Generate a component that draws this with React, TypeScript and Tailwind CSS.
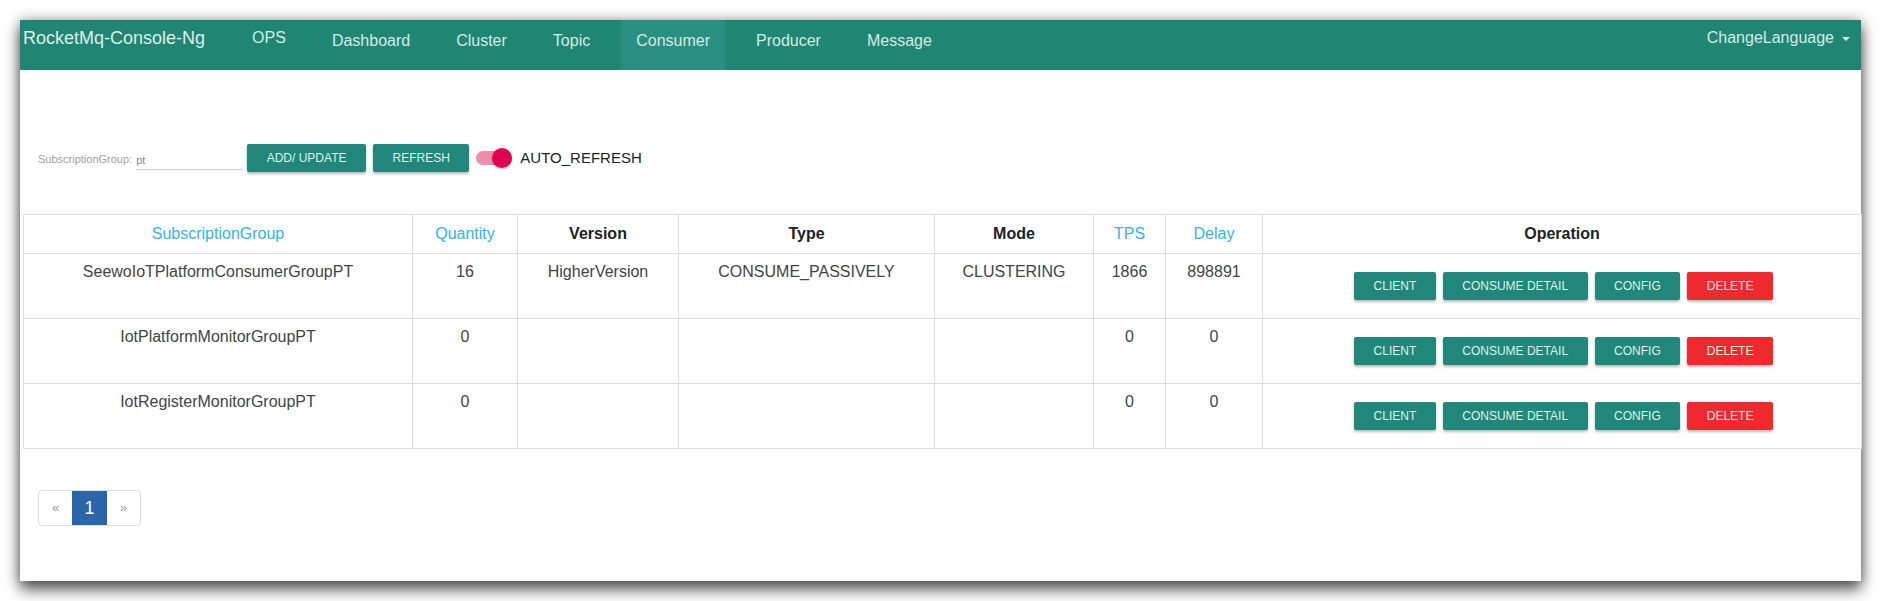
import React from "react";

const font = { fontFamily: '"Liberation Sans", Arial, sans-serif' };

function Btn({ label, red }: { label: string; red?: boolean }) {
  return (
    <button
      className={
        "h-[28px] px-[19.5px] rounded-[2px] text-[12px] leading-[28px] shadow-[0_2px_3px_rgba(0,0,0,0.28)] " +
        (red ? "bg-[#ef2a2e] text-[#fde7e7]" : "bg-[#21877a] text-[#def2ee]")
      }
    >
      {label}
    </button>
  );
}

const rows = [
  { group: "SeewoIoTPlatformConsumerGroupPT", qty: "16", version: "HigherVersion", type: "CONSUME_PASSIVELY", mode: "CLUSTERING", tps: "1866", delay: "898891" },
  { group: "IotPlatformMonitorGroupPT", qty: "0", version: "", type: "", mode: "", tps: "0", delay: "0" },
  { group: "IotRegisterMonitorGroupPT", qty: "0", version: "", type: "", mode: "", tps: "0", delay: "0" },
];

export default function App() {
  const navLinks = ["Dashboard", "Cluster", "Topic", "Consumer", "Producer", "Message"];
  const td = "border border-[#dddddd] align-top pt-[8px] text-[16px] leading-[20px] text-[#444] text-center";
  const thBlue = "border border-[#dddddd] py-[9px] text-[16px] leading-[20px] font-normal text-[#33b2f2] text-center";
  const thDark = "border border-[#dddddd] py-[9px] text-[16px] leading-[20px] font-bold text-[#222] text-center";
  return (
    <div className="w-[1881px] h-[601px] bg-white pt-[20px] pl-[20px]" style={font}>
      <div className="w-[1841px] h-[561px] bg-white flex flex-col shadow-[0_9px_14px_rgba(0,0,0,0.6),0_0_12px_rgba(0,0,0,0.35)]">
        {/* navbar */}
        <div className="h-[50px] bg-[#218574] flex items-stretch shrink-0">
          <div className="pl-[3px] pr-[32px] pt-[8px] text-[18px] leading-[20px] text-[#dcefeb]">RocketMq-Console-Ng</div>
          <div className="flex gap-[16px] items-stretch">
            <div className="px-[15px] pt-[8px] text-[16px] leading-[20px] text-[#d3ebe6]">OPS</div>
            {navLinks.map((l) => (
              <div
                key={l}
                className={
                  "px-[15px] pt-[11px] text-[16px] leading-[20px] text-[#d3ebe6] " +
                  (l === "Consumer" ? "bg-[#2a8f80]" : "")
                }
              >
                {l}
              </div>
            ))}
          </div>
          <div className="ml-auto pr-[11px] pt-[8px] flex items-start gap-[8px] text-[16px] leading-[20px] text-[#d3ebe6]">
            <span>ChangeLanguage</span>
            <span className="mt-[9px] w-0 h-0 border-t-[4px] border-t-[#d3ebe6] border-x-[4px] border-x-transparent" />
          </div>
        </div>

        {/* toolbar */}
        <div className="mt-[74px] h-[28px] flex items-center pl-[18px]">
          <span className="text-[11px] text-[#a0a0a0] leading-[14px] pt-[2px]">SubscriptionGroup:</span>
          <div className="ml-[4px] w-[107px] h-[20px] border-b border-[#cfcfcf] text-[11px] leading-[14px] text-[#888] pt-[3px] pl-[0px] mt-[4px]">
            pt
          </div>
          <div className="ml-[4px] flex gap-[7px]">
            <Btn label="ADD/ UPDATE" />
            <Btn label="REFRESH" />
          </div>
          <div className="ml-[7px] relative w-[36px] h-[20px] flex items-center">
            <div className="w-[34px] h-[14px] rounded-full bg-[#f08cab]" />
            <div className="absolute right-0 top-0 w-[20px] h-[20px] rounded-full bg-[#e0004f] shadow-[0_1px_2px_rgba(0,0,0,0.3)]" />
          </div>
          <span className="ml-[8px] text-[15px] leading-[20px] text-[#222]">AUTO_REFRESH</span>
        </div>

        {/* table */}
        <div className="mt-[42px] pl-[3px]">
          <table className="border-collapse table-fixed w-[1838px]">
            <thead>
              <tr>
                <th className={thBlue + " w-[389px]"}>SubscriptionGroup</th>
                <th className={thBlue + " w-[105px]"}>Quantity</th>
                <th className={thDark + " w-[161px]"}>Version</th>
                <th className={thDark + " w-[256px]"}>Type</th>
                <th className={thDark + " w-[159px]"}>Mode</th>
                <th className={thBlue + " w-[72px]"}>TPS</th>
                <th className={thBlue + " w-[97px]"}>Delay</th>
                <th className={thDark + " w-[599px]"}>Operation</th>
              </tr>
            </thead>
            <tbody>
              {rows.map((r) => (
                <tr key={r.group}>
                  <td className={td}>{r.group}</td>
                  <td className={td}>{r.qty}</td>
                  <td className={td}>{r.version}</td>
                  <td className={td}>{r.type}</td>
                  <td className={td}>{r.mode}</td>
                  <td className={td}>{r.tps}</td>
                  <td className={td}>{r.delay}</td>
                  <td className="border border-[#dddddd] py-[18px] align-middle">
                    <div className="flex justify-center gap-[7px] pl-[3px]">
                      <Btn label="CLIENT" />
                      <Btn label="CONSUME DETAIL" />
                      <Btn label="CONFIG" />
                      <Btn label="DELETE" red />
                    </div>
                  </td>
                </tr>
              ))}
            </tbody>
          </table>
        </div>

        {/* pagination */}
        <div className="mt-[41px] pl-[18px]">
          <div className="inline-flex h-[36px] border border-[#dddddd] rounded-[4px] overflow-hidden">
            <div className="w-[33px] flex items-center justify-center text-[13px] text-[#999]">«</div>
            <div className="w-[35px] flex items-center justify-center bg-[#2a64a9] text-[18px] text-white">1</div>
            <div className="w-[33px] flex items-center justify-center text-[13px] text-[#999]">»</div>
          </div>
        </div>
      </div>
    </div>
  );
}
